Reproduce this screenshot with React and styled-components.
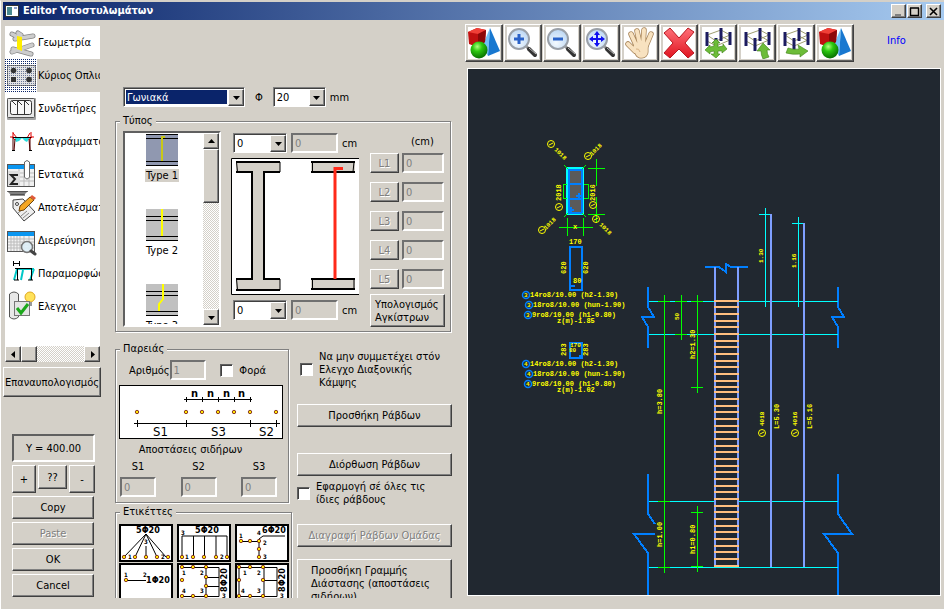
import React, { useState } from "react";
import styled, { createGlobalStyle } from "styled-components";

const GlobalStyle = createGlobalStyle`
    * {
        box-sizing: border-box;
    }
    body {
        margin: 0;
        background: #d4d0c8;
    }
    body, button, input, select {
        font-family: "DejaVu Sans Condensed", "DejaVu Sans", sans-serif;
        font-size: 11px;
        line-height: 13px;
        color: #000;
    }
`;

const Window = styled.div`
    display: flex;
    flex-direction: column;
    height: 100vh;
    padding: 1px 0 0 2px;
    border-top: 1px solid #d4d0c8;
    border-left: 1px solid #fff;
    overflow: hidden;
`;

const TitleBar = styled.header`
    display: flex;
    align-items: center;
    gap: 4px;
    height: 18px;
    flex: none;
    padding: 0 3px 0 2px;
    background: linear-gradient(to right, #0a246a, #a6caf0);
`;

const Title = styled.h1`
    flex: 1;
    margin: 0;
    font-size: 11px;
    line-height: 16px;
    color: #fff;
`;

const Button = styled.button`
    display: flex;
    align-items: center;
    justify-content: center;
    height: ${p => p.$height || 23}px;
    width: ${p => p.$width ? p.$width + "px" : "auto"};
    padding: 0 2px;
    background: #d4d0c8;
    border: 1px solid;
    border-color: #fff #404040 #404040 #fff;
    border-radius: 0;
    box-shadow: inset -1px -1px #808080;
    white-space: nowrap;

    &:disabled {
        color: #808080;
        text-shadow: 1px 1px #fff;
    }
`;

const TitleButton = styled(Button)`
    width: 15px;
    height: 14px;
    padding: 0;
    margin-left: ${p => p.$apart ? 3 : 0}px;
`;

const TitleButtons = styled.div`
    display: flex;
    gap: 1px;
`;

const Body = styled.main`
    display: flex;
    flex: 1;
    min-height: 0;
`;

const Sidebar = styled.aside`
    display: flex;
    flex-direction: column;
    width: 98px;
    flex: none;
    padding-top: 6px;
`;

const NavList = styled.nav`
    height: 320px;
    margin: 0 1px 0 2px;
    background: #fff;
    overflow: hidden;
`;

const NavItem = styled.button`
    display: flex;
    align-items: center;
    gap: 1px;
    width: 100%;
    height: 33px;
    padding: 0;
    border: none;
    background: ${p => p.$active ? "#d4d0c8" : "#fff"};
    white-space: nowrap;
    overflow: hidden;

    svg {
        flex: none;
    }
`;

const dither = `repeating-conic-gradient(#fff 0 25%, #d4d0c8 0 50%) 0 0 / 2px 2px`;

const ScrollBar = styled.div`
    display: flex;
    flex-direction: ${p => p.$vertical ? "column" : "row"};
    align-items: stretch;
    height: ${p => p.$vertical ? "auto" : "16px"};
    width: ${p => p.$vertical ? "16px" : "auto"};
    margin: ${p => p.$vertical ? "0" : "0 1px 0 2px"};
    background: ${dither};
`;

const ScrollButton = styled(Button)`
    flex: none;
    width: 16px;
    height: 16px;
    padding: 0;
`;

const Thumb = styled.div`
    flex: 0 0 ${p => p.$size}px;
    background: #d4d0c8;
    border: 1px solid;
    border-color: #fff #404040 #404040 #fff;
    box-shadow: inset -1px -1px #808080;
`;

const Track = styled.div`
    flex: 1;
`;

const Recalculate = styled(Button)`
    width: 100%;
    flex: none;
    margin-top: 5px;
`;

const SideActions = styled.div`
    display: flex;
    flex-direction: column;
    gap: 3px;
    margin: 37px 6px 0 9px;
`;

const Readout = styled.output`
    display: flex;
    align-items: center;
    justify-content: center;
    height: 28px;
    border: 2px solid;
    border-color: #606060 #fff #fff #606060;
`;

const StepRow = styled.div`
    display: flex;
    align-items: flex-start;
    justify-content: space-between;
`;

const ActionPair = styled.div`
    display: grid;
    gap: 3px;
    margin-right: 1px;
`;

const Settings = styled.section`
    width: 337px;
    flex: none;
    margin: 0 13px 11px 14px;
    padding-top: 67px;
    overflow: hidden;
`;

const Row = styled.div`
    display: flex;
    align-items: center;
    gap: ${p => p.$gap || 0}px;
`;

const TopRow = styled(Row)`
    padding-left: 8px;
    margin-bottom: 8px;
`;

const SelectFrame = styled.span`
    position: relative;
    display: inline-flex;
    flex: none;
    width: ${p => p.$width}px;
    height: 20px;
    border: 1px solid;
    border-color: #808080 #fff #fff #808080;
    box-shadow: inset 1px 1px #404040;
    background: #fff;
    padding: 1px;
`;

const Select = styled.select`
    appearance: none;
    width: 100%;
    margin: 1px 16px 1px 1px;
    padding: 0 1px;
    border: none;
    border-radius: 0;
    outline: none;
    background: ${p => p.$dark ? "#0a246a" : "#fff"};
    color: ${p => p.$dark ? "#fff" : "#000"};
`;

const SelectArrow = styled.span`
    position: absolute;
    top: 1px;
    right: 0;
    bottom: 0;
    width: 16px;
    display: flex;
    align-items: center;
    justify-content: center;
    background: #d4d0c8;
    border: 1px solid;
    border-color: #fff #404040 #404040 #fff;
    box-shadow: inset -1px -1px #808080;
    pointer-events: none;
`;

const Field = styled.input`
    width: ${p => p.$width}px;
    height: 20px;
    padding: 0 2px;
    background: #d4d0c8;
    border: 2px solid;
    border-color: #707070 #fff #fff #707070;
    border-radius: 0;

    &:disabled {
        color: #808080;
    }
`;

const Group = styled.fieldset`
    width: ${p => p.$width ? p.$width + "px" : "auto"};
    min-width: 0;
    margin: 0 1px 0 0;
    padding: ${p => p.$padding};
    border: 1px solid #808080;
    box-shadow: 1px 1px #fff, inset 1px 1px #fff;

    legend {
        height: 12px;
        line-height: 12px;
        margin-left: 1px;
        padding: 0 3px;
        background: #d4d0c8;
    }
`;

const TypeGrid = styled.div`
    display: grid;
    grid-template-columns: 98px 129px 75px;
    column-gap: 10px;
    height: 195px;
    padding-left: 4px;
`;

const TypeBox = styled.div`
    display: flex;
    border: 2px solid;
    border-color: #606060 #fff #fff #606060;
    background: #fff;
    overflow: hidden;
`;

const TypeList = styled.div`
    display: flex;
    flex-direction: column;
    align-items: center;
    flex: 1;
    gap: 25px;
    padding: 1px 4px 0 0;
    height: 191px;
    overflow: hidden;
`;

const TypeItem = styled.button`
    display: flex;
    flex-direction: column;
    align-items: center;
    flex: none;
    height: 50px;
    gap: 3px;
    padding: 0;
    border: none;
    background: none;

    span {
        padding: 0 1px;
        background: ${p => p.$active ? "#d4d0c8" : "none"};
    }
`;

const Beams = styled.div`
    display: flex;
    flex-direction: column;
    gap: 5px;
    padding-top: 2px;

    svg {
        display: block;
    }
`;

const BeamFields = styled(Row)`
    padding-left: 2px;
`;

const Hooks = styled.div`
    display: flex;
    flex-direction: column;
    gap: 5px;
    padding-top: 4px;
`;

const HookTitle = styled.span`
    padding-left: 41px;
`;

const HookRows = styled.div`
    display: grid;
    gap: 9px;
`;

const HookButton = styled(Button)`
    justify-content: flex-start;
    padding-left: 4px;
    text-align: left;
`;

const LeftBlocks = styled.div`
    display: flex;
    flex-direction: column;
    gap: 3px;
    width: 177px;
`;

const LowerRow = styled.div`
    display: flex;
    gap: 5px;
    margin-top: 11px;
`;

const CheckBox = styled.input`
    appearance: none;
    flex: none;
    width: 13px;
    height: 13px;
    margin: 0;
    background: #fff;
    border: 1px solid;
    border-color: #606060 #fff #fff #606060;
    box-shadow: inset 1px 1px #404040;

    &:checked {
        background: radial-gradient(#000 40%, #fff 45%);
    }
`;

const CheckLabel = styled.label`
    display: flex;
    align-items: center;
    gap: 6px;
`;

const ExcludeLabel = styled(CheckLabel)`
    padding-left: 3px;
`;

const ApplyLabel = styled(CheckLabel)`
    margin-top: 4px;
`;

const CountRow = styled.div`
    display: flex;
    align-items: center;
    justify-content: space-between;
    padding: 0 18px 0 10px;
    margin-bottom: 5px;
`;

const SpacingTitle = styled.div`
    margin: 4px 0;
    text-align: center;
    padding-right: 22px;
`;

const Spacings = styled.div`
    display: flex;
    justify-content: space-between;
    padding: 0 7px 0 1px;

    label {
        display: grid;
        gap: 4px;
        justify-items: center;
    }
`;

const Tiles = styled.div`
    display: grid;
    grid-template-columns: repeat(3, 54px);
    gap: 1px 4px;
`;

const Tile = styled.button`
    display: block;
    height: 38px;
    padding: 0;
    border: 2px solid #000;
    border-radius: 0;
    background: #fff;

    svg {
        display: block;
    }
`;

const Operations = styled.div`
    display: flex;
    flex-direction: column;
    flex: 1;
    padding-top: 7px;
`;

const OperationButton = styled(Button)`
    flex: none;
    margin-top: ${p => p.$above}px;
`;

const LongButton = styled(OperationButton)`
    height: 52px;
    padding: 4px 2px 0 13px;
    align-items: flex-start;
    justify-content: flex-start;
    text-align: left;
`;

const Viewer = styled.section`
    display: flex;
    flex-direction: column;
    flex: 1;
    min-width: 0;
    padding: 4px 3px 13px 0;
`;

const ToolBar = styled.div`
    display: flex;
    gap: 1px;
    margin-bottom: 6px;
`;

const ToolButton = styled(Button)`
    flex: none;
    width: 38px;
    height: 38px;
    padding: 1px;
    box-shadow: inset -1px -1px #606060;

    svg {
        display: block;
        background: #fff;
    }
`;

const InfoLink = styled.a`
    margin: 10px 0 0 32px;
    color: #0000ff;
    text-decoration: none;
`;

const Canvas = styled.div`
    flex: 1;
    min-height: 0;
    margin-left: 2px;
    background: #212830;
    border: 1px solid #fff;
    overflow: hidden;

    svg {
        display: block;
        width: 100%;
        height: auto;
    }
`;

const CadText = styled.text`
    font-family: "Liberation Mono", monospace;
    font-weight: bold;
    font-size: ${p => p.$size || 7}px;
    fill: #ffff00;
`;

const Arrow = ({dir}) => {
    const shapes = {
        down: "M1 3h7L4.5 7z",
        up: "M1 6h7L4.5 2z",
        left: "M6 1v7L2 4.5z",
        right: "M3 1v7L7 4.5z",
    };
    return <svg width="9" height="9" viewBox="0 0 9 9"><path d={shapes[dir]} /></svg>;
};

function DropDown({label, width, options, dark}) {
    return <SelectFrame $width={width}>
        <Select aria-label={label} $dark={dark}>
            {options.map(o => <option key={o}>{o}</option>)}
        </Select>
        <SelectArrow><Arrow dir="down" /></SelectArrow>
    </SelectFrame>;
}

/* sidebar icons */

const navIcons = {
    geometry: <>
        <g stroke="#858585" strokeWidth="5" strokeLinecap="round">
            <path d="M7 8l8 4M10 13l18-3M8 23l18 5M7 26l20-7M13 7l3 2" />
        </g>
        <g stroke="#cdcdcd" strokeWidth="3.5" strokeLinecap="round">
            <path d="M7 8l8 4M10 13l18-3M8 23l18 5M7 26l20-7M13 7l3 2" />
        </g>
        <path d="M12 10l5 1v14l-5-2z" fill="#ffee00" />
    </>,
    rebar: <>
        <rect width="32" height="33" fill="url(#navDots)" />
        <rect x="2.5" y="6.5" width="28" height="20" rx="2" fill="#c8c8c8" stroke="#555" />
        <rect x="2.5" y="6.5" width="28" height="20" rx="2" fill="url(#navDots)" opacity=".5" />
        <g fill="#333">
            <circle cx="8.5" cy="11.5" r="2.8" /><circle cx="24" cy="11.5" r="2.8" />
            <rect x="6" y="18" width="5" height="5" /><circle cx="24" cy="20.5" r="2.8" />
        </g>
    </>,
    ties: <>
        <rect x="2" y="6" width="29" height="22" rx="1" fill="#a5a5a5" />
        <rect x="2.5" y="6.5" width="27" height="19" rx="1" fill="#e8e8e8" stroke="#555" />
        <rect x="5.5" y="8.5" width="21" height="14" rx="2" fill="#f8f8f8" stroke="#333" />
        <path d="M12.5 8v15M19.5 8v15M7 9l4 4M13 9l4 4M20 9l4 4" stroke="#333" fill="none" />
    </>,
    diagrams: <>
        <path d="M9 12l2 5 3-1 3-3 3 3 2 1 3-5z" fill="#28e0e0" />
        <path d="M8 12v14M25 12v14M10 14l-1 12M24 14l1 12" stroke="#500000" fill="none" />
        <path d="M8 7v5H5M26 7v5h3M8 8l4 5M25 8l-3 5M7 12l3 3M27 12l-3 3" stroke="#e00000" fill="none" />
        <path d="M8 12.5h18M7 25.5h3M24 25.5h3" stroke="#000" />
    </>,
    forces: <>
        <rect x="2.5" y="6.5" width="27" height="22" fill="#f0f0f0" stroke="#555" />
        <rect x="3" y="7" width="26" height="4" fill="#0a96f0" />
        <path d="M3 15h26M3 19h26M3 23h26M14 11v17M19 11v17M24 11v17" stroke="#bbb" />
        <rect x="3" y="13" width="12" height="15" fill="#ddd" />
        <path d="M13 17H6l4 4-4 5h7" stroke="#222" strokeWidth="2" fill="none" />
        <path d="M19.5 4v15q2.500 4 5 0V4q-2.500-3-5 0z" fill="#fff" stroke="#666" />
    </>,
    results: <>
        <path d="M2 0h21l-4 4H6z" fill="#808080" />
        <path d="M2 0h21M5 4h15" stroke="#222" />
        <path d="M8 9l10-1 12 13-11 9L8 17z" fill="#eee" stroke="#444" />
        <circle cx="12" cy="13" r="1.5" fill="#fff" stroke="#444" />
        <path d="M13 22l5-4M16 25l6-5M18 27l6-5" stroke="#888" />
        <path d="M15 15l10-9 4 3-10 10-5 1z" fill="#f5a623" stroke="#6b4410" />
        <path d="M25 6l2-2 4 3-2 2z" fill="#e05a3a" />
    </>,
    explore: <>
        <rect x="2.5" y="7.5" width="27" height="20" fill="#f2f2f2" stroke="#555" />
        <rect x="3" y="8" width="26" height="4" fill="#0a96f0" />
        <path d="M3 15h26M3 18h26M3 21h26M3 24h26M6 12v15M9 12v15M12 12v15M15 12v15M19 12v15M24 12v15" stroke="#bbb" />
        <circle cx="22" cy="23" r="5.500" fill="#dff0f8" fillOpacity=".9" stroke="#777" strokeWidth="1.5" />
        <path d="M26 27l4 3" stroke="#444" strokeWidth="3" strokeLinecap="round" />
    </>,
    deform: <>
        <path d="M8.5 4v5M14.5 4v5M8 6.5h6" stroke="#000" />
        <path d="M12 12l-3 11M18 13l-2 10M29 12l-4 11M12 12h17" stroke="#00c8c8" strokeWidth="2" fill="none" />
        <path d="M10 11.5h17M12.5 12v11M26.5 12v11M9 23h5M23 23h5" stroke="#000" fill="none" />
    </>,
    checks: <>
        <path d="M4.5 4q4.500-4 9 0v23q-4.500 4-9 0z" fill="#e8e8e8" stroke="#555" />
        <circle cx="25" cy="7" r="5" fill="#ffe25a" stroke="#e0a820" />
        <path d="M23 12h4v4h-4z" fill="#999" />
        <rect x="9.5" y="11.5" width="15" height="14" fill="#e4e4e4" stroke="#777" />
        <path d="M12 18l4 5 7-9" stroke="#1ca81c" strokeWidth="3" fill="none" />
    </>,
};

const navItems = [
    ["geometry", "Γεωμετρία"],
    ["rebar", "Κύριος Οπλισ"],
    ["ties", "Συνδετήρες"],
    ["diagrams", "Διαγράμματα"],
    ["forces", "Εντατικά"],
    ["results", "Αποτελέσματ"],
    ["explore", "Διερεύνηση"],
    ["deform", "Παραμορφώσ"],
    ["checks", "Ελεγχοι"],
];

/* toolbar icons */

const Shapes = () => <>
    <path d="M22 1l-8 19 6 9z" fill="#6fc0f5" />
    <path d="M22 1l-2 28 12-5z" fill="#1878d0" />
    <path d="M0 5l9-4 9 2-1 12-8 5-8-3z" fill="#c01010" />
    <path d="M0 5l9-4 9 2-8 4z" fill="#f04038" />
    <path d="M10 7l8-4-1 12-7 5z" fill="#8c0808" />
    <circle cx="11" cy="23" r="8.5" fill="url(#green)" />
</>;

const Lens = ({children}) => <>
    <path d="M19 19l3 3" stroke="#999" strokeWidth="3" />
    <path d="M22 22l6 6" stroke="#333" strokeWidth="4" strokeLinecap="round" />
    <path d="M22 21l7 6" stroke="#bbb" strokeWidth="1" />
    <circle cx="12" cy="12" r="10" fill="url(#lens)" stroke="#9aa0a8" strokeWidth="2" />
    {children}
</>;

const handLines = "M7 7l5 11M13 4l3 14M20 3l-1 15M27 7l-5 12M4 17l7 7";

const Hand = () => <>
    <g stroke="#a8855a" strokeLinecap="round">
        <path d={handLines} strokeWidth="5.5" />
        <path d="M15 21l2 4M18 20v5" strokeWidth="13" />
    </g>
    <g stroke="#f8e2c0" strokeLinecap="round">
        <path d={handLines} strokeWidth="4" />
        <path d="M15 21l2 4M18 20v5" strokeWidth="11.500" />
    </g>
    <path d="M12 22q3-1 4 3" stroke="#d8b488" />
</>;

const Columns = ({children}) => <>
    <path d="M5 8l14-5 9 5-14 6zM5 14l9 5M14 19l14-6M19 9l9 5" stroke="#a0a070" fill="none" />
    <path d="M5 5v14M14 11v13M19 1v13M28 5v13" stroke="#1c1c60" strokeWidth="3" fill="none" />
    {children}
</>;

const tools = [
    ["Σχήματα", <Shapes />],
    ["Μεγέθυνση", <Lens><path d="M12 7v10M7 12h10" stroke="#2a62c8" strokeWidth="3" /></Lens>],
    ["Σμίκρυνση", <Lens><path d="M7 12h10" stroke="#2a62c8" strokeWidth="3" /></Lens>],
    ["Προσαρμογή", <Lens>
        <path d="M12 6v12M6 12h12" stroke="#1010f0" strokeWidth="2" />
        <path d="M12 4l3 4H9zM12 20l3-4H9zM4 12l4-3v6zM20 12l-4-3v6z" fill="#1010f0" />
    </Lens>],
    ["Μετακίνηση", <Hand />],
    ["Διαγραφή", <path
        d="M7 1l9 10L25 1l6 4-9 11 9 10-6 5-9-9-9 9-6-5 9-10L1 6z"
        fill="url(#red)" stroke="#b81820" strokeLinejoin="round"
    />],
    ["Μετακίνηση υποστυλωμάτων", <Columns>
        <path d="M14 12l4 4h-2v4l5-1v-2l4 5-5 4v-2h-4v3h2l-4 4-5-4h3v-3l-4 1v2l-5-4 5-5v2l4-1v-3h-2z" fill="#6cbc38" stroke="#3f8018" strokeWidth=".6" />
    </Columns>],
    ["Επάνω όροφος", <Columns>
        <path d="M22 16l7 7h-3q0 4 2 7l-6 2q-2-4-2-8h-4z" fill="#6cbc38" stroke="#3f8018" strokeWidth=".6" />
    </Columns>],
    ["Επόμενο υποστύλωμα", <Columns>
        <path d="M28 24l-8 6v-3q-7 1-14-1l2-5q6 2 11 1l-1-4z" fill="#6cbc38" stroke="#3f8018" strokeWidth=".6" />
    </Columns>],
    ["Τρισδιάστατη όψη", <Shapes />],
];

const GradientDefs = () => <svg width="0" height="0" aria-hidden="true">
    <defs>
        <radialGradient id="green" cx=".4" cy=".3" r=".7">
            <stop offset="0" stopColor="#b0ff80" /><stop offset=".4" stopColor="#2cc810" /><stop offset="1" stopColor="#087000" />
        </radialGradient>
        <radialGradient id="lens" cx=".4" cy=".7" r=".8">
            <stop offset="0" stopColor="#f4faff" /><stop offset="1" stopColor="#b4d2f2" />
        </radialGradient>
        <linearGradient id="red" x2="0" y2="1">
            <stop offset="0" stopColor="#ff7078" /><stop offset="1" stopColor="#e01420" />
        </linearGradient>
        <pattern id="navDots" width="2" height="2" patternUnits="userSpaceOnUse">
            <rect width="2" height="2" fill="#fff" />
            <rect width="1" height="1" fill="#0a246a" />
        </pattern>
    </defs>
</svg>;

const HiddenDefs = styled.div`
    height: 0;
    overflow: hidden;
`;

/* small drawings of the settings column */

const typeBars = ["M16 27V3M15 3h4", "M16 0v27", "M17 0v15l-4 5v7"];

const TypePicture = ({index, active}) => <svg width="32" height="32" viewBox="0 0 32 32">
    <rect width="32" height="32" fill={active ? "#9098b0" : "#c0c0c0"} />
    <path d={index ? "M0 7.5h32M0 11.5h32M0 27.5h32M0 31.5h32" : "M0 .5h32M0 4.5h32M0 27.5h32M0 31.5h32"} stroke="#000" />
    <path d={typeBars[index]} stroke={active ? "#c8c818" : "#ffff00"} strokeWidth="2" fill="none" />
</svg>;

const BeamPicture = () => <svg width="128" height="137" viewBox="0 0 128 137">
    <rect width="128" height="137" fill="#fff" />
    <path d="M128 .5H.5v136H128" stroke="#000" fill="none" />
    <path d="M5 4h44v10H33v107h16v11H5v-11h16V14H5z" fill="#d4d0c8" />
    <path d="M5 4h44M5 14h16v107H5M49 14H33v107h16M5 132h44" stroke="#000" strokeWidth="2" fill="none" />
    <path d="M5.5 4l1 10M49 4v10M5.5 121l1 11M49 121v11" stroke="#000" />
    <path d="M80 4h44v10H80zM80 121h44v10H80z" fill="#d4d0c8" />
    <path d="M80 4h44M80 14h44M80 121h44M80 131h44" stroke="#000" strokeWidth="2" />
    <path d="M81.5 4v10M123 4l-1 10M81.5 121v10M123 121v10" stroke="#000" />
    <path d="M112 10.5h-8V121" stroke="#ff2a1a" strokeWidth="3" fill="none" />
</svg>;

const Dots = ({points}) => points.map(([x, y]) =>
    <circle key={x + "-" + y} cx={x} cy={y} r="1.7" fill="#ffe800" stroke="#701010" strokeWidth=".8" />
);

const SideFaceText = styled.text`
    font-family: "DejaVu Sans Condensed", "DejaVu Sans", sans-serif;
    font-weight: ${p => p.$bold ? "bold" : "normal"};
    font-size: ${p => p.$size}px;
`;

const SideFacePicture = () => <svg width="164" height="54" viewBox="0 0 164 54">
    <rect x=".5" y=".5" width="163" height="53" fill="#fff" stroke="#000" />
    <path d="M65 14.5h68M67.5 12v5M83.5 12v5M99.5 12v5M115.5 12v5M131.5 12v5" stroke="#000" />
    <path d="M15 38.5h146M18.5 35v7M67.5 35v7M131.5 35v7M157.5 35v7" stroke="#000" />
    <Dots points={[[18, 27], [67, 27], [83, 27], [99, 27], [115, 27], [131, 27], [157, 27]]} />
    {[72, 88, 104, 119].map(x => <SideFaceText key={x} x={x} y="12" $size={11} $bold>n</SideFaceText>)}
    <SideFaceText x="34" y="51" $size={13}>S1</SideFaceText>
    <SideFaceText x="92" y="51" $size={13}>S3</SideFaceText>
    <SideFaceText x="140" y="51" $size={13}>S2</SideFaceText>
</svg>;

const tiles = [
    {
        path: "M3 31L25 8l20 23M14 31L25 8l11 23M25 20v11",
        dots: [[3, 31], [14, 31], [25, 31], [36, 31], [47, 31]],
        texts: [[15, 7, "5Φ20", 9], [23, 18, "3"], [7, 33, "1"], [40, 33, "2"]],
    },
    {
        path: "M3 31V10h45v21M14.5 10v21M25.5 10v21M37 10v21",
        dots: [[3, 31], [14, 31], [25, 31], [37, 31], [48, 31]],
        texts: [[16, 7, "5Φ20", 9], [2, 9, "3"], [6, 33, "1"], [41, 33, "2"]],
    },
    {
        path: "M4 15.5h18v16M22 15v-2l4-3h22",
        dots: [[4, 15], [13, 15], [22, 15], [22, 23], [22, 31]],
        texts: [[25, 7, "6Φ20", 9], [2, 12, "1"], [20, 9, "4"], [26, 19, "2"], [26, 33, "3"]],
    },
    {
        path: "M5 15.5h20",
        dots: [[5, 15]],
        texts: [[25, 18, "1Φ20", 9], [3, 12, "1"], [22, 12, "2"]],
    },
    {
        path: "M3 2.500h37v29M3 31.5h37M27 2v30M27 12.500h13M27 21.5h13",
        dots: [[3, 2], [14, 2], [27, 2], [27, 12], [27, 21], [3, 15], [3, 31], [14, 31], [27, 31]],
        texts: [[3, 10, "1"], [21, 10, "2"], [3, 28, "4"], [21, 28, "3"], [43, 33, "3"]],
        side: true,
    },
    {
        path: "M2 31V2.500h38v29H2M27 2v30M27 15.5h13",
        dots: [[2, 2], [13, 2], [26, 2], [26, 15], [2, 15], [2, 31], [13, 31], [26, 31]],
        texts: [[6, 10, "1"], [20, 10, "2"], [4, 28, "4"], [20, 28, "3"], [43, 33, "3"]],
        side: true,
    },
];

const TilePicture = ({tile}) => <svg width="50" height="34" viewBox="0 0 50 34">
    <path d={tile.path} stroke="#000" fill="none" />
    <Dots points={tile.dots} />
    {tile.texts.map(([x, y, text, size]) =>
        <SideFaceText key={text + x + y} x={x} y={y} $size={size || 6} $bold>{text}</SideFaceText>
    )}
    {tile.side && <SideFaceText transform="translate(48 27) rotate(-90)" $size={9} $bold>8Φ20</SideFaceText>}
</svg>;

/* drawing area */

const stirrups = [
    301, 307, 314, 321, 327, 334, 341, 347, 354, 361, 367, 374, 381, 387, 392, 399, 406, 412, 419, 426,
    432, 439, 446, 452, 459, 466, 472, 479, 486, 492, 499, 506, 512, 519, 526, 532, 539, 546, 552, 559, 566,
];

// x, y, text, rotation, size
const cadTexts = [
    [554, 150, "1018", 45, 6], [592, 156, "1018", -45, 6], [546, 230, "1018", -45, 6], [599, 225, "1018", 45, 6],
    [561, 201, "2018", -90], [595, 201, "2016", -90], [573, 229, "x", 0],
    [569, 244, "170", 0], [566, 274, "620", -90], [588, 274, "620", -90], [573, 283, "80", 0],
    [530, 297, "14ro8/10.00 (h2-1.30)", 0], [533, 307, "18ro8/10.00 (hun-1.90)", 0],
    [532, 317, "9ro8/10.00 (h1-0.80)", 0], [557, 323, "z(m)-1.85", 0],
    [566, 356, "283", -90], [588, 356, "283", -90], [570, 347, "170", 0, 6], [569, 352, "80", 0, 6],
    [530, 366, "14ro8/10.00 (h2-1.30)", 0], [533, 376, "18ro8/10.00 (hun-1.90)", 0],
    [532, 386, "9ro8/10.00 (h1-0.80)", 0], [557, 392, "z(m)-1.02", 0],
    [763, 263, "1.30", -90, 6], [796, 268, "1.16", -90, 6], [679, 320, "50", -90, 6],
    [695, 359, "h2=1.30", -90], [662, 414, "h=3.80", -90], [662, 547, "h=1.00", -90], [695, 554, "h1=0.80", -90],
    [764, 426, "4018", -90, 6], [779, 429, "L=5.30", -90], [797, 426, "4016", -90, 6], [812, 429, "L=5.16", -90],
];

const marks = [
    [551, 144], [588, 156], [559, 207], [593, 205], [542, 230], [596, 219], [762, 433], [795, 433],
];

const numbers = [
    [526, 295, "3"], [529, 305, "3"], [528, 315, "3"], [526, 364, "4"], [529, 374, "4"], [528, 384, "4"],
];

const Drawing = () => <svg viewBox="468 69 472 526" role="img" aria-label="Σχέδιο υποστυλώματος">
    <g fill="none" shapeRendering="crispEdges">
        <rect x="569" y="170" width="13" height="43" fill="#5a5a5a" />
        <rect x="567" y="168" width="16" height="46" stroke="#00ffff" strokeWidth="2" />
        <path d="M569 170h13v43h-13zM569 183.5h13M569 199h13" stroke="#007fff" strokeWidth="2" />
        <path d="M576 196h6M579 193v6M569 210h5M571 207v6M571 286h4M579 356h3" stroke="#007fff" strokeWidth="2" />
        <path d="M569.5 247h12v43h-12zM569.5 343h12v15h-12z" stroke="#007fff" strokeWidth="2" />
        <g stroke="#007fff" strokeWidth="2">
            <path d="M648 287v20l6 10h-12l6 10v21M838 287v20l6 10h-12l6 10v21" />
            <path d="M648 474v40l7 10M655 534h-21l14 19v42M838 474v40l14 20h-28l14 19v42" />
            <path d="M705 267h14l7 5v-8l5 3h17" />
        </g>
        <path
            d="M649 301.5h66M739 301.5h99M649 334.5h66M739 334.5h99M649 501.5h66M739 501.5h99M649 567.5h189"
            stroke="#00ffff"
        />
        <path d="M765.5 208v99M759 214.5h12M798.5 217v90M792 223.5h12" stroke="#00ffff" />
        <g stroke="#00ff00">
            <path d="M567 184.5h-4v14h4M584 184.5h4v14h-4M564 165l4 4M586 165l-4 4M564 217l4-4M586 217l-4-4" />
            <path d="M596.5 159v27M596.5 197v26M588 168.5h17M588 214.5h17M559 227.5h34M567.5 218v18M583.5 218v18" />
            <path d="M664.5 295v278M658 301.5h12M658 501.5h12M658 567.5h12" />
            <path d="M681.5 295v45M675 301.5h12M675 334.5h12M697.5 295v98M691 301.5h12M691 387.5h12" />
            <path d="M697.5 506v66M691 512.5h12M691 566.5h12" />
        </g>
        <path d="M715 267v300M738 267v300M771 214v353M804 223v344" stroke="#7f9fff" strokeWidth="2" />
        <path d={stirrups.map(y => `M714 ${y}h25`).join("")} stroke="#ffbf7f" strokeWidth="2" />
    </g>
    <g fill="none" stroke="#ffff00">
        {marks.map(([x, y]) => <g key={x}>
            <circle cx={x} cy={y} r="3.5" />
            <path d={`M${x - 2} ${y + 1}l4-2`} />
        </g>)}
    </g>
    {numbers.map(([x, y, text]) => <g key={y}>
        <circle cx={x} cy={y} r="3.5" fill="none" stroke="#007fff" strokeWidth="1.5" />
        <CadText x={x - 2} y={y + 2} $size={6}>{text}</CadText>
    </g>)}
    {cadTexts.map(([x, y, text, angle, size]) =>
        <CadText key={x + "/" + y} transform={`translate(${x} ${y}) rotate(${angle})`} $size={size}>{text}</CadText>
    )}
</svg>;

function BeamRow({name}) {
    return <BeamFields $gap={4}>
        <DropDown label={name} width={54} options={["0", "1", "2"]} />
        <Field aria-label={name + " cm"} $width={47} defaultValue="0" disabled />
        <span>cm</span>
    </BeamFields>;
}

function TypeGroup() {
    const [type, setType] = useState(0);

    return <Group $padding="4px 3px 5px">
        <legend>Τύπος</legend>
        <TypeGrid>
            <TypeBox>
                <TypeList>
                    {[0, 1, 2].map(i =>
                        <TypeItem key={i} $active={i === type} onClick={() => setType(i)}>
                            <TypePicture index={i} active={i === type} />
                            <span>Type {i + 1}</span>
                        </TypeItem>
                    )}
                </TypeList>
                <ScrollBar $vertical>
                    <ScrollButton aria-label="Επάνω"><Arrow dir="up" /></ScrollButton>
                    <Thumb $size={54} />
                    <Track />
                    <ScrollButton aria-label="Κάτω"><Arrow dir="down" /></ScrollButton>
                </ScrollBar>
            </TypeBox>
            <Beams>
                <BeamRow name="Επάνω άγκιστρο" />
                <BeamPicture />
                <BeamRow name="Κάτω άγκιστρο" />
            </Beams>
            <Hooks>
                <HookTitle>(cm)</HookTitle>
                <HookRows>
                    {["L1", "L2", "L3", "L4", "L5"].map(name =>
                        <Row key={name} $gap={3}>
                            <Button $width={29} $height={20} disabled>{name}</Button>
                            <Field aria-label={name} $width={42} defaultValue="0" disabled />
                        </Row>
                    )}
                </HookRows>
                <HookButton $height={33}>Υπολογισμός<br />Αγκίστρων</HookButton>
            </Hooks>
        </TypeGrid>
    </Group>;
}

function SideFaceGroup() {
    return <Group $width={174} $padding="5px 4px 5px 3px">
        <legend>Παρειάς</legend>
        <CountRow>
            <Row>
                <label htmlFor="count">Αριθμός</label>
                <Field id="count" $width={36} defaultValue="1" disabled />
            </Row>
            <CheckLabel><CheckBox type="checkbox" />Φορά</CheckLabel>
        </CountRow>
        <Row><SideFacePicture /></Row>
        <SpacingTitle>Αποστάσεις σιδήρων</SpacingTitle>
        <Spacings>
            {["S1", "S2", "S3"].map(name =>
                <label key={name}>{name}<Field $width={36} defaultValue="0" disabled /></label>
            )}
        </Spacings>
    </Group>;
}

function App() {
    const [page, setPage] = useState("rebar");
    const [y, setY] = useState(400);

    return <Window>
        <GlobalStyle />
        <HiddenDefs><GradientDefs /></HiddenDefs>
        <TitleBar>
            <svg width="14" height="12" viewBox="0 0 14 12">
                <rect x=".5" y=".5" width="13" height="11" fill="#fff" stroke="#333" />
                <rect x="2" y="2" width="5" height="8" fill="#4a8a90" />
                <path d="M9 3h3" stroke="#2040a0" />
            </svg>
            <Title>Editor Υποστυλωμάτων</Title>
            <TitleButtons>
                <TitleButton aria-label="Ελαχιστοποίηση">
                    <svg width="11" height="11"><path d="M2 9h6" stroke="#808080" strokeWidth="2" /></svg>
                </TitleButton>
                <TitleButton aria-label="Μεγιστοποίηση">
                    <svg width="11" height="11"><path d="M1.5 2v7.5h8V2M1 2h9" stroke="#000" fill="none" strokeWidth="1.4" /></svg>
                </TitleButton>
                <TitleButton $apart aria-label="Κλείσιμο">
                    <svg width="11" height="11"><path d="M2 2l7 7M9 2l-7 7" stroke="#000" strokeWidth="1.6" /></svg>
                </TitleButton>
            </TitleButtons>
        </TitleBar>
        <Body>
            <Sidebar>
                <NavList>
                    {navItems.map(([id, label]) =>
                        <NavItem key={id} $active={id === page} onClick={() => setPage(id)}>
                            <svg width="32" height="33" viewBox="0 0 32 33" fill="none">{navIcons[id]}</svg>
                            {label}
                        </NavItem>
                    )}
                </NavList>
                <ScrollBar>
                    <ScrollButton aria-label="Αριστερά"><Arrow dir="left" /></ScrollButton>
                    <Thumb $size={16} />
                    <Track />
                    <ScrollButton aria-label="Δεξιά"><Arrow dir="right" /></ScrollButton>
                </ScrollBar>
                <Recalculate $height={30}>Επαναυπολογισμός</Recalculate>
                <SideActions>
                    <Readout>Y = {y.toFixed(2)}</Readout>
                    <StepRow>
                        <Button $width={24} $height={28} onClick={() => setY(y + 10)}>+</Button>
                        <Button $width={29} $height={24}>??</Button>
                        <Button $width={26} $height={28} onClick={() => setY(y - 10)}>-</Button>
                    </StepRow>
                    <ActionPair>
                        <Button>Copy</Button>
                        <Button disabled>Paste</Button>
                    </ActionPair>
                    <ActionPair>
                        <Button>OK</Button>
                        <Button>Cancel</Button>
                    </ActionPair>
                </SideActions>
            </Sidebar>
            <Settings>
                <TopRow $gap={10}>
                    <DropDown label="Θέση ράβδων" width={122} options={["Γωνιακά", "Παρειάς"]} dark />
                    <span>Φ</span>
                    <Row $gap={4}>
                        <DropDown label="Φ" width={53} options={["20", "18", "16"]} />
                        <span>mm</span>
                    </Row>
                </TopRow>
                <TypeGroup />
                <LowerRow>
                    <LeftBlocks>
                        <SideFaceGroup />
                        <Group $width={177} $padding="6px 3px 0">
                            <legend>Ετικέττες</legend>
                            <Tiles>
                                {tiles.map((tile, i) =>
                                    <Tile key={i} aria-label={"Ετικέττα " + (i + 1)}><TilePicture tile={tile} /></Tile>
                                )}
                            </Tiles>
                        </Group>
                    </LeftBlocks>
                    <Operations>
                        <ExcludeLabel>
                            <CheckBox type="checkbox" />
                            <span>Να μην συμμετέχει στόν<br />Ελεγχο Διαξονικής<br />Κάμψης</span>
                        </ExcludeLabel>
                        <OperationButton $above={15}>Προσθήκη Ράβδων</OperationButton>
                        <OperationButton $above={26}>Διόρθωση Ράβδων</OperationButton>
                        <ApplyLabel>
                            <CheckBox type="checkbox" />
                            <span>Εφαρμογή σέ όλες τις<br />ίδιες ράβδους</span>
                        </ApplyLabel>
                        <OperationButton $above={18} disabled>Διαγραφή Ράβδων Ομάδας</OperationButton>
                        <LongButton $above={12}>Προσθήκη Γραμμής<br />Διάστασης (αποστάσεις<br />σιδήρων)</LongButton>
                    </Operations>
                </LowerRow>
            </Settings>
            <Viewer>
                <ToolBar>
                    {tools.map(([label, icon]) =>
                        <ToolButton key={label} aria-label={label} title={label}>
                            <svg width="32" height="32" viewBox="0 0 32 32" fill="none">{icon}</svg>
                        </ToolButton>
                    )}
                    <InfoLink href="#info">Info</InfoLink>
                </ToolBar>
                <Canvas><Drawing /></Canvas>
            </Viewer>
        </Body>
    </Window>;
}

export default App;
